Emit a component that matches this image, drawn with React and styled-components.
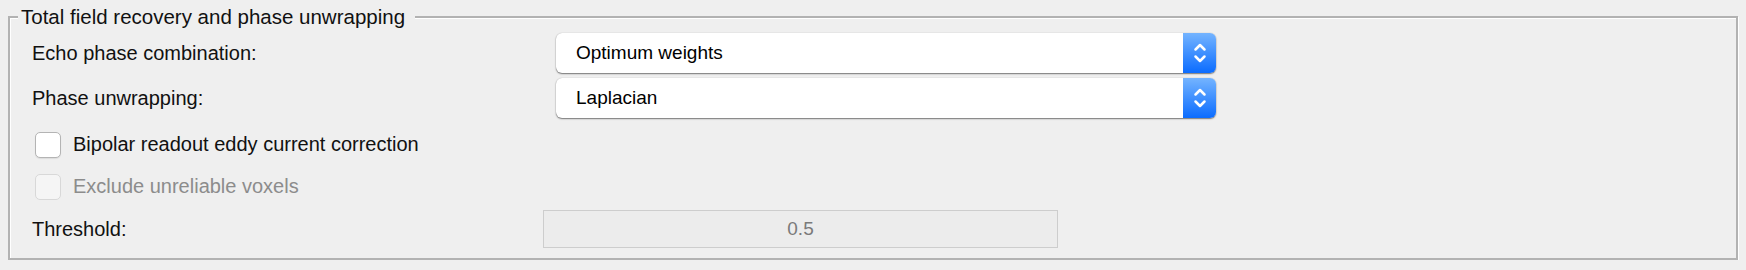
import styled, { createGlobalStyle } from 'styled-components';

const GlobalStyle = createGlobalStyle`
  body {
    margin: 0;
    background: #efefef;
    font-family: "Liberation Sans", Arial, sans-serif;
    color: #111;
  }
`;

const Chevrons = () => (
  <svg width="14" height="24" viewBox="0 0 14 24" fill="none">
    <path d="M2.5 8.5 L7 4 L11.5 8.5" stroke="#fff" strokeWidth="2.5" strokeLinecap="round" strokeLinejoin="round" />
    <path d="M2.5 15.5 L7 20 L11.5 15.5" stroke="#fff" strokeWidth="2.5" strokeLinecap="round" strokeLinejoin="round" />
  </svg>
);

const Dropdown = ({ value }) => (
  <Select>
    <SelectText>{value}</SelectText>
    <Stepper>
      <Chevrons />
    </Stepper>
  </Select>
);

const App = () => {
  return (
    <Page>
      <GlobalStyle />
      <Group>
        <Title>Total field recovery and phase unwrapping</Title>
        <Body>
          <Row $top={5}>
            <Label>Echo phase combination:</Label>
            <Dropdown value="Optimum weights" />
          </Row>
          <Row $top={5}>
            <Label>Phase unwrapping:</Label>
            <Dropdown value="Laplacian" />
          </Row>
          <CheckRow $top={13}>
            <Box />
            <Label>Bipolar readout eddy current correction</Label>
          </CheckRow>
          <CheckRow $top={15} $disabled>
            <Box $disabled />
            <Label $disabled>Exclude unreliable voxels</Label>
          </CheckRow>
          <Row $top={10}>
            <Label>Threshold:</Label>
            <Field>0.5</Field>
          </Row>
        </Body>
      </Group>
    </Page>
  );
};

export default App;

const Page = styled.div`
  padding: 5px 8px 0;
`;

const Group = styled.fieldset`
  margin: 0;
  padding: 0 0 10px 22px;
  min-width: 0;
  border: 2px solid #b2b2b2;
  box-shadow: inset 1px 1px 0 #fff, 1px 1px 0 #fff;
`;

const Title = styled.legend`
  margin-left: -14px;
  padding: 0 10px 0 3px;
  font-size: 20.5px;
  line-height: 23px;
  background: #efefef;
`;

const Body = styled.div`
  display: flex;
  flex-direction: column;
`;

const Row = styled.div`
  display: grid;
  grid-template-columns: 511px 1fr;
  align-items: center;
  margin-top: ${p => p.$top}px;
`;

const CheckRow = styled.div`
  display: flex;
  align-items: center;
  gap: 12px;
  padding-left: 3px;
  height: 27px;
  margin-top: ${p => p.$top}px;
`;

const Label = styled.span`
  font-size: 20px;
  color: ${p => (p.$disabled ? '#8c8c8c' : '#111')};
`;

const Select = styled.div`
  margin-left: 13px;
  width: 660px;
  height: 40px;
  display: flex;
  background: #fff;
  border-radius: 6px;
  overflow: hidden;
  box-shadow: 0 1px 1.5px rgba(0, 0, 0, 0.5), 0 0 1px rgba(0, 0, 0, 0.25);
`;

const SelectText = styled.span`
  flex: 1;
  display: flex;
  align-items: center;
  padding-left: 20px;
  font-size: 19px;
  color: #000;
`;

const Stepper = styled.span`
  width: 33px;
  display: flex;
  align-items: center;
  justify-content: center;
  background: linear-gradient(#74b4ff, #0b6cff);
`;

const Box = styled.span`
  width: 26px;
  height: 26px;
  box-sizing: border-box;
  border-radius: 5px;
  border: 1px solid ${p => (p.$disabled ? '#d8d8d8' : '#b4b4b4')};
  background: ${p => (p.$disabled ? '#f5f5f5' : '#fff')};
  box-shadow: ${p => (p.$disabled ? 'none' : '0 1px 1px rgba(0,0,0,0.08)')};
`;

const Field = styled.div`
  width: 515px;
  height: 38px;
  box-sizing: border-box;
  border: 1px solid #cdcdcd;
  background: #ececec;
  display: flex;
  align-items: center;
  justify-content: center;
  font-size: 19px;
  color: #7a7a7a;
`;
